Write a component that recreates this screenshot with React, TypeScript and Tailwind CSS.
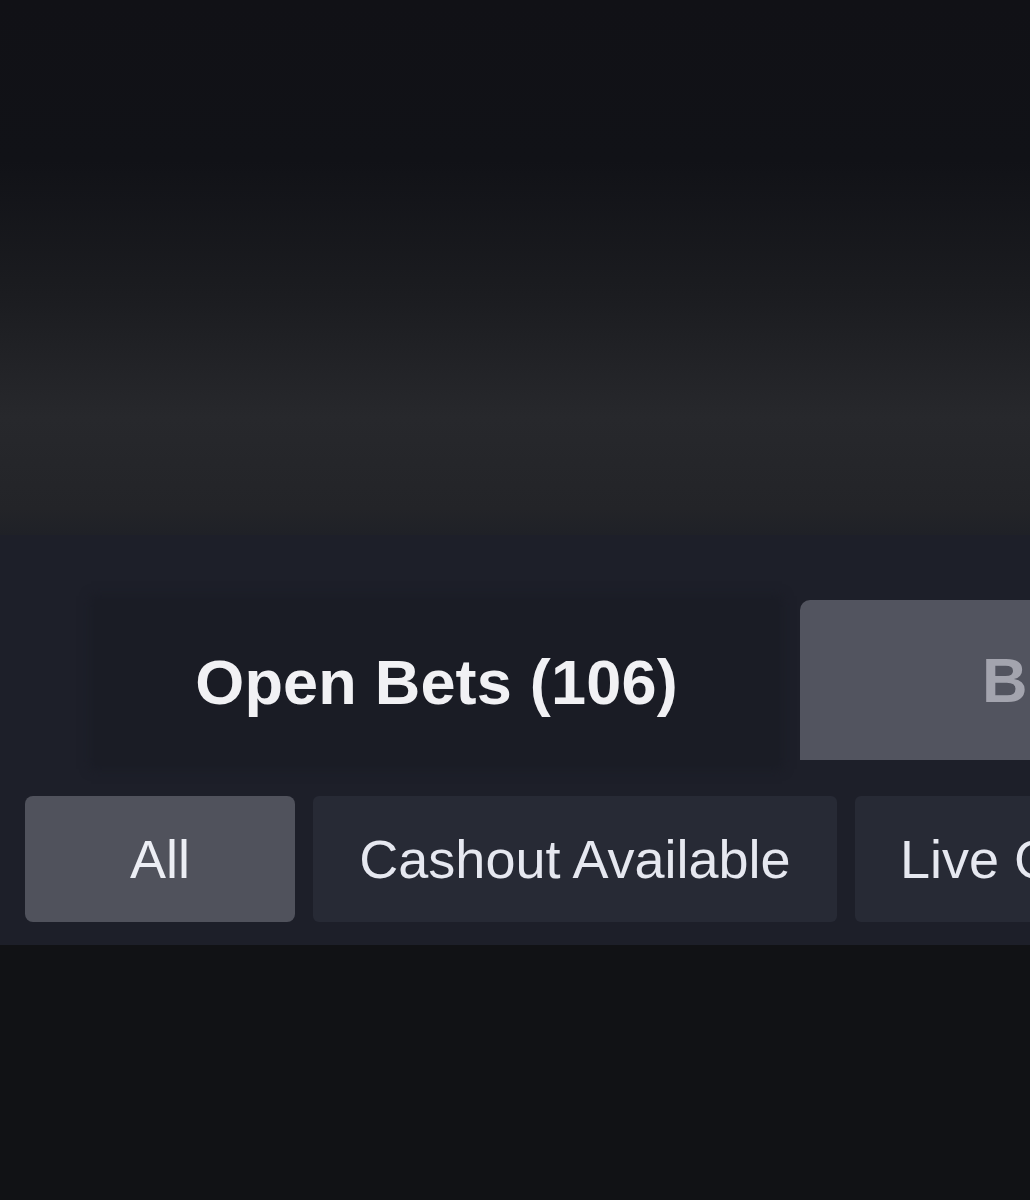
import React from "react";

export default function App() {
  return (
    <div
      className="w-[1030px] h-[1200px] overflow-hidden bg-[#111215] flex flex-col"
      style={{ fontFamily: '"Liberation Sans", Arial, sans-serif' }}
    >
      <div className="h-[535px] shrink-0 bg-[linear-gradient(to_bottom,#111116_0%,#111217_30%,#1b1c20_55%,#27282c_78%,#232428_95%,#1f2127_100%)]" />
      <div className="h-[410px] shrink-0 bg-[#1d1f29] flex flex-col pt-[65px] overflow-hidden">
        <div className="flex h-[165px] items-start">
          <div className="ml-[95px] w-[683px] h-[165px] shrink-0 bg-[#1a1c25] shadow-[0_0_10px_4px_#1a1c25] flex items-center justify-center">
            <span className="text-[63px] font-bold text-[#f1f1f4] leading-none tracking-[0.2px] whitespace-nowrap">
              Open Bets (106)
            </span>
          </div>
          <div className="ml-[22px] w-[400px] h-[160px] shrink-0 bg-[#52545f] rounded-tl-[10px] flex items-center pl-[182px]">
            <span className="text-[63px] font-bold text-[#a3a4ae] leading-none whitespace-nowrap">
              Bet History
            </span>
          </div>
        </div>
        <div className="flex gap-[18px] pl-[25px] mt-[31px] h-[126px] items-stretch">
          <div className="w-[270px] shrink-0 bg-[#50525c] rounded-[8px] flex items-center justify-center">
            <span className="text-[54px] text-[#eceef4] leading-none">All</span>
          </div>
          <div className="w-[524px] shrink-0 bg-[#272a35] rounded-[6px] flex items-center justify-center">
            <span className="text-[54px] text-[#e6e8f0] leading-none whitespace-nowrap">
              Cashout Available
            </span>
          </div>
          <div className="w-[300px] shrink-0 bg-[#272a35] rounded-[6px] flex items-center pl-[45px]">
            <span className="text-[54px] text-[#e6e8f0] leading-none whitespace-nowrap">
              Live Games
            </span>
          </div>
        </div>
      </div>
      <div className="flex-1 bg-[#111215]" />
    </div>
  );
}
